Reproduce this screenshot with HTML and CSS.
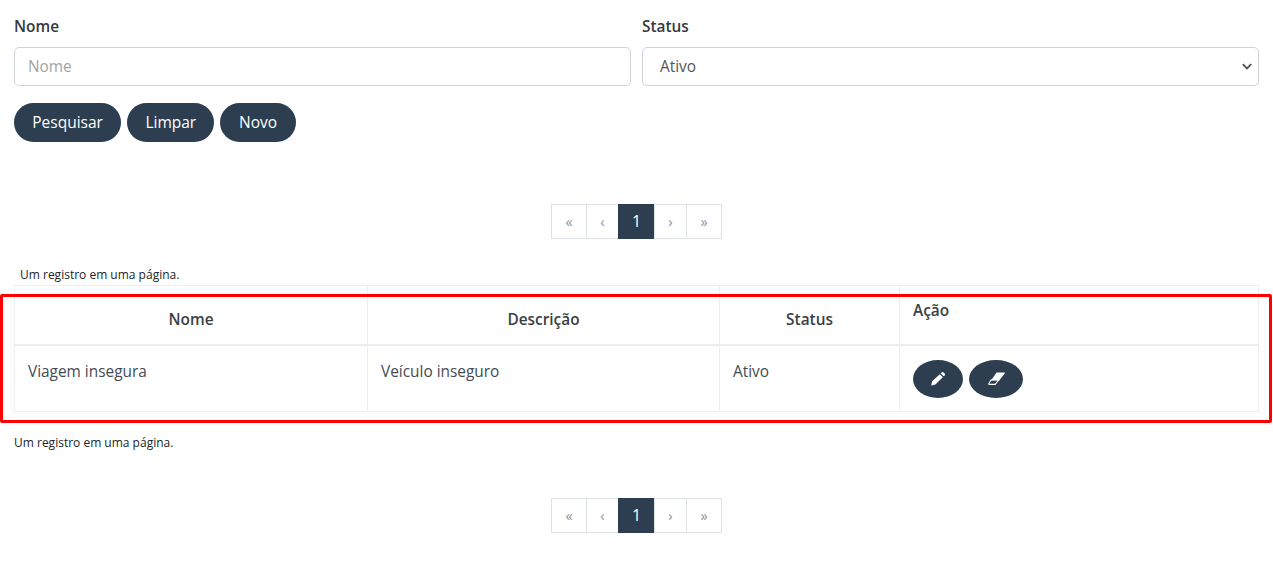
FILE: index.html
```html
<!DOCTYPE html>
<html lang="pt-BR">
<head>
<meta charset="utf-8">
<title>Pesquisa</title>
<link rel="stylesheet" href="styles.css">
</head>
<body>
<main class="page">
  <form class="filters">
    <div class="field">
      <label class="field-label" for="nome">Nome</label>
      <input class="control" id="nome" type="text" placeholder="Nome">
    </div>
    <div class="field">
      <label class="field-label" for="status">Status</label>
      <select class="control select" id="status"><option>Ativo</option></select>
    </div>
  </form>
  <div class="actions">
    <button class="btn" type="button">Pesquisar</button>
    <button class="btn" type="button">Limpar</button>
    <button class="btn btn-new" type="button">Novo</button>
  </div>
  <nav class="pagination pagination-top">
    <a class="page-item page-first">«</a><a class="page-item page-prev">‹</a><a class="page-item page-current">1</a><a class="page-item page-next">›</a><a class="page-item page-last">»</a>
  </nav>
  <p class="summary summary-top">Um registro em uma página.</p>
  <div class="table-wrap">
    <table class="table">
      <colgroup><col class="col-a"><col class="col-b"><col class="col-c"><col class="col-d"></colgroup>
      <thead>
        <tr><th>Nome</th><th>Descrição</th><th>Status</th><th class="th-action">Ação</th></tr>
      </thead>
      <tbody>
        <tr>
          <td>Viagem insegura</td>
          <td>Veículo inseguro</td>
          <td>Ativo</td>
          <td class="td-action">
            <button class="icon-btn icon-edit" type="button" aria-label="Editar">
              <svg class="icon" viewBox="0 0 16 16" width="15" height="15"><path fill="#fff" d="M11.6 1.2a1.1 1.1 0 0 1 1.5 0l1.7 1.7a1.1 1.1 0 0 1 0 1.5l-1.3 1.3-3.2-3.2zM9.4 3.4l3.2 3.2-7.9 7.9-3.9.9a.4.4 0 0 1-.5-.5l.9-3.9z"/></svg>
            </button>
            <button class="icon-btn icon-erase" type="button" aria-label="Apagar">
              <svg class="icon" viewBox="0 0 17 13" width="17" height="13"><path fill="#fff" d="M8.6.5h7.6c.5 0 .8.6.5 1L11.2 8.5H3z"/><path fill="none" stroke="#fff" stroke-width="1.1" d="M3.2 7.8h7.6l-3.6 4.6H1.2a.5.5 0 0 1-.4-.8z"/></svg>
            </button>
          </td>
        </tr>
      </tbody>
    </table>
    <div class="highlight"></div>
  </div>
  <p class="summary summary-bottom">Um registro em uma página.</p>
  <nav class="pagination pagination-bottom">
    <a class="page-item page-first">«</a><a class="page-item page-prev">‹</a><a class="page-item page-current">1</a><a class="page-item page-next">›</a><a class="page-item page-last">»</a>
  </nav>
</main>
</body>
</html>
```
FILE: styles.css
```css
* { box-sizing: border-box; }
html, body { margin: 0; padding: 0; }
body {
  font-family: "Open Sans", sans-serif;
  font-size: 15.4px;
  line-height: 23px;
  color: #444b52;
  background: #fff;
  overflow: hidden;
}
.page { padding: 15px 14px 0; height: 565px; }
.filters { display: grid; grid-template-columns: 617px 617px; column-gap: 11px; }
.field { display: flex; flex-direction: column; }
.field-label { font-weight: 600; margin-bottom: 9px; color: #343a40; }
.control {
  height: 39px;
  width: 100%;
  border: 1px solid #ced4da;
  border-radius: 5px;
  padding: 0 13px;
  font: inherit;
  color: #555;
  background: #fff;
}
.control::placeholder { color: #a3a3a3; opacity: 1; }
.select {
  appearance: none;
  padding-left: 17px;
  background-image: url("data:image/svg+xml,%3Csvg xmlns='http://www.w3.org/2000/svg' width='10' height='7' viewBox='0 0 10 7'%3E%3Cpath fill='none' stroke='%23555' stroke-width='1.9' d='M.8 1.2 5 5.4l4.2-4.2'/%3E%3C/svg%3E");
  background-repeat: no-repeat;
  background-position: right 6px center;
}
.actions { display: flex; gap: 6px; margin-top: 17px; }
.btn {
  height: 39px;
  padding: 0 18.25px;
  border: 0;
  border-radius: 20px;
  background: #2c3e50;
  color: #fff;
  font: inherit;
  font-size: 15.5px;
}
.btn-new { padding: 0 18.6px; }
.pagination { display: flex; justify-content: center; height: 35px; }
.pagination-top { margin-top: 62px; }
.pagination-bottom { margin-top: 47px; }
.page-item {
  display: flex;
  align-items: center;
  justify-content: center;
  border: 1px solid #dee2e6;
  margin-left: -1px;
  color: #8a949e;
  font-size: 14.4px;
  background: #fff;
}
.page-first { width: 36px; margin-left: 0; }
.page-prev { width: 33px; }
.page-current { width: 37px; background: #2c3e50; border-color: #2c3e50; color: #fff; font-size: 16px; }
.page-next { width: 33px; }
.page-last { width: 36px; }
.summary { margin: 0; font-size: 12px; line-height: 16px; color: #212529; }
.summary-top { margin: 28px 0 2px 6px; }
.summary-bottom { margin-top: 23px; }
.table-wrap { position: relative; }
.table { width: 1244px; border-collapse: collapse; table-layout: fixed; }
.col-a { width: 353px; }
.col-b { width: 352px; }
.col-c { width: 180px; }
.col-d { width: 359px; }
.table th, .table td { border: 1px solid #eceeef; padding: 14px 13px 13px; vertical-align: top; }
.table th { height: 59px; font-weight: 600; vertical-align: bottom; padding-bottom: 13px; text-align: center; border-bottom-width: 2px; color: #3a3f44; }
.table .th-action { text-align: left; vertical-align: top; padding-top: 13px; }
.table td { height: 67px; font-weight: 400; }
.td-action { white-space: nowrap; }
.icon-btn {
  display: inline-flex;
  align-items: center;
  justify-content: center;
  width: 50px;
  height: 38px;
  padding: 0;
  border: 0;
  border-radius: 50%;
  background: #2c3e50;
  vertical-align: top;
}
.icon-erase { width: 54px; margin-left: 2px; }
.highlight {
  position: absolute;
  left: -14px;
  top: 9px;
  width: 1272px;
  height: 129px;
  border: 3px solid #f00;
  border-radius: 2px;
  pointer-events: none;
}
```
